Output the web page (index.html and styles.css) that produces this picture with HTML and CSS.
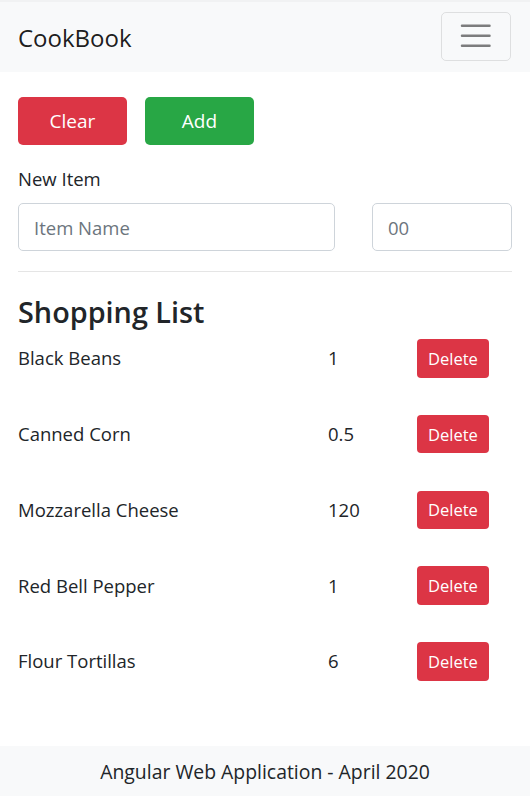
FILE: index.html
```html
<!DOCTYPE html>
<html lang="en">
<head>
<meta charset="utf-8">
<title>CookBook</title>
<link rel="stylesheet" href="styles.css">
</head>
<body>
<nav class="navbar">
  <span class="brand">CookBook</span>
  <button class="toggler" aria-label="Toggle navigation">
    <svg class="toggler-icon" viewBox="0 0 30 30" width="37.5" height="37.5"><path stroke="rgba(0,0,0,0.5)" stroke-width="2" stroke-linecap="round" stroke-miterlimit="10" d="M4 7h22M4 15h22M4 23h22"/></svg>
  </button>
</nav>
<main class="container">
  <div class="actions">
    <button class="btn btn-danger">Clear</button>
    <button class="btn btn-success">Add</button>
  </div>
  <label class="label" for="name">New Item</label>
  <div class="form-row">
    <input id="name" class="input" type="text" placeholder="Item Name">
    <input class="input" type="text" placeholder="00">
  </div>
  <hr class="divider">
  <h3 class="heading">Shopping List</h3>
  <ul class="list">
    <li class="item"><span class="name">Black Beans</span><span class="qty">1</span><button class="btn-sm">Delete</button></li>
    <li class="item"><span class="name">Canned Corn</span><span class="qty">0.5</span><button class="btn-sm">Delete</button></li>
    <li class="item"><span class="name">Mozzarella Cheese</span><span class="qty">120</span><button class="btn-sm">Delete</button></li>
    <li class="item"><span class="name">Red Bell Pepper</span><span class="qty">1</span><button class="btn-sm">Delete</button></li>
    <li class="item"><span class="name">Flour Tortillas</span><span class="qty">6</span><button class="btn-sm">Delete</button></li>
  </ul>
</main>
<footer class="footer">Angular Web Application - April 2020</footer>
</body>
</html>
```
FILE: styles.css
```css
* { box-sizing: border-box; }
html, body { margin: 0; padding: 0; }
body {
  font-family: "Open Sans", "Noto Sans", sans-serif;
  font-size: 18.5px;
  color: #212529;
  background: #fff;
  min-height: 100vh;
  display: flex;
  flex-direction: column;
}
.navbar {
  height: 72px;
  background: #f8f9fa;
  border-top: 2px solid #f1f2f3;
  display: flex;
  align-items: center;
  justify-content: space-between;
  padding: 0 19px 0 18px;
}
.brand { font-size: 24px; line-height: 30px; color: rgba(0,0,0,.9); margin-top: 2px; }
.toggler {
  width: 70px; height: 49px;
  margin-top: -2px;
  border: 1px solid rgba(0,0,0,.1);
  border-radius: 5px;
  background: transparent;
  display: flex; align-items: center; justify-content: center;
  padding: 0;
}
.container { padding: 25px 18px 0 18px; flex: 1; }
.actions { display: flex; gap: 18px; }
.btn {
  width: 109px; height: 48px;
  border: none; border-radius: 5px;
  color: #fff; font-family: inherit; font-size: 19px;
}
.btn-danger { background: #dc3545; }
.btn-success { background: #28a745; }
.label { display: block; margin-top: 19px; line-height: 30px; margin-bottom: 9px; }
.form-row { display: grid; grid-template-columns: 317px 140px; justify-content: space-between; }
.input {
  height: 48px; border: 1px solid #ced4da; border-radius: 5px;
  padding: 0 15px; font-family: inherit; font-size: 18.5px; color: #495057;
  width: 100%;
}
.input::placeholder { color: #6c757d; }
.divider { border: 0; border-top: 1px solid rgba(0,0,0,.1); margin: 20px 0; }
.heading { font-size: 28.8px; font-weight: 600; line-height: 40px; margin: 0 0 7px; }
.list { list-style: none; margin: 0; padding: 0; }
.item {
  display: grid; grid-template-columns: 310px 89px auto;
  height: 75.75px; align-content: start;
}
.item > * { align-self: center; }
.name, .qty { line-height: 38px; }
.btn-sm {
  justify-self: start;
  height: 38.5px; padding: 0 11px;
  background: #dc3545; color: #fff; border: none; border-radius: 4px;
  font-family: inherit; font-size: 16.5px;
}
.footer {
  height: 50px; background: #f8f9fa;
  display: flex; align-items: center; justify-content: center;
  font-size: 19.4px;
}
```
